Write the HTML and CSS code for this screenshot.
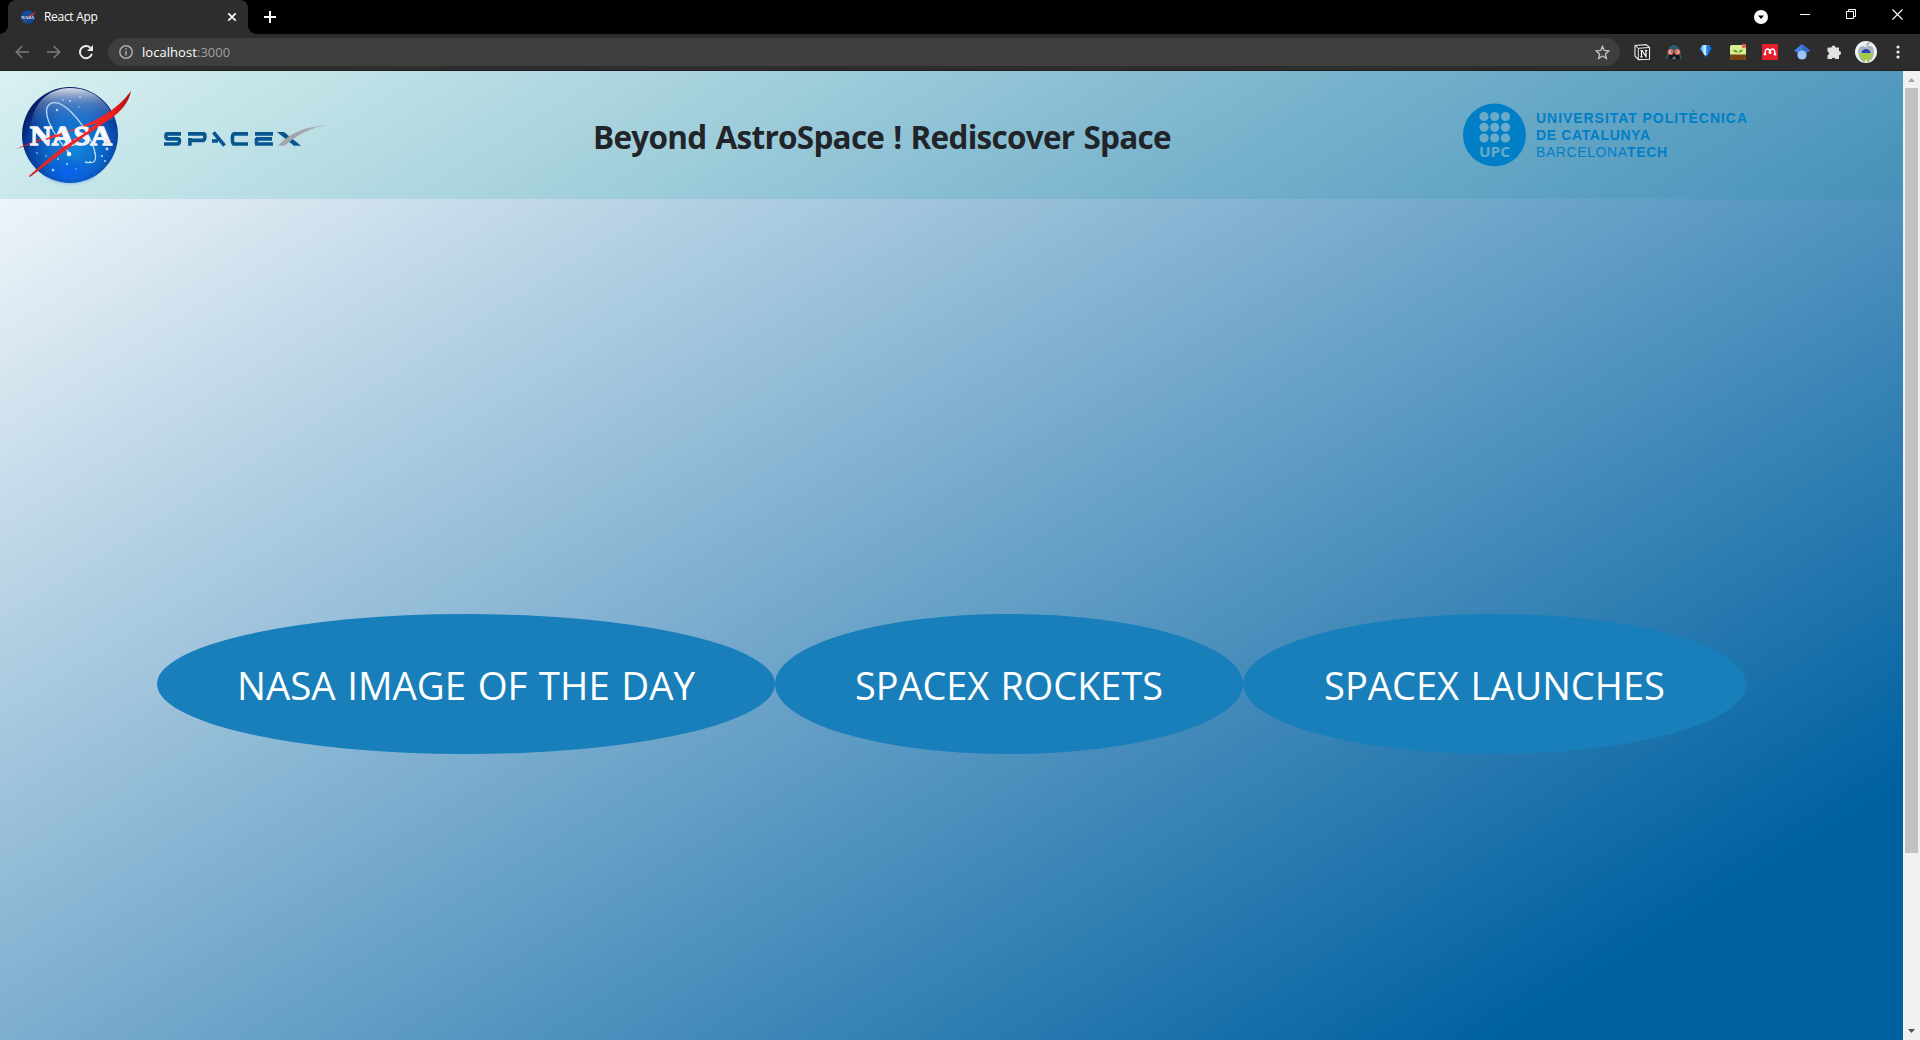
FILE: index.html
```html
<!DOCTYPE html>
<html lang="en">
<head>
<meta charset="utf-8">
<title>React App</title>
<link rel="stylesheet" href="styles.css">
</head>
<body>
<svg class="defs" width="0" height="0">
  <defs>
    <radialGradient id="globe" cx=".55" cy=".62" r=".58">
      <stop offset="0" stop-color="#138ade"/><stop offset=".55" stop-color="#0b62c4"/><stop offset=".85" stop-color="#073c9a"/><stop offset="1" stop-color="#03206a"/>
    </radialGradient>
    <linearGradient id="gloss" x1="0" y1="0" x2="0" y2="1">
      <stop offset="0" stop-color="#fff" stop-opacity=".85"/><stop offset=".35" stop-color="#bcd8f2" stop-opacity=".4"/><stop offset="1" stop-color="#4a96dd" stop-opacity="0"/>
    </linearGradient>
    <radialGradient id="glow"><stop offset="0" stop-color="#0a62f0"/><stop offset="1" stop-color="#0a62f0" stop-opacity="0"/></radialGradient>
    <linearGradient id="letters" x1="0" y1="0" x2="0" y2="1"><stop offset="0" stop-color="#fff"/><stop offset=".5" stop-color="#fff"/><stop offset="1" stop-color="#c9c9d2"/></linearGradient>
    <linearGradient id="wing" x1="0" y1="0" x2="1" y2="0"><stop offset="0" stop-color="#b01825"/><stop offset=".5" stop-color="#fb3434"/><stop offset=".85" stop-color="#ea1c1c"/><stop offset="1" stop-color="#a80f12"/></linearGradient>
    <linearGradient id="swoosh" x1="0" y1="0" x2="1" y2="0"><stop offset="0" stop-color="#a3a7ab"/><stop offset=".6" stop-color="#a3a7ab"/><stop offset="1" stop-color="#a3a7ab" stop-opacity=".2"/></linearGradient>
    <linearGradient id="gem" x1="0" y1="0" x2="1" y2="0"><stop offset="0" stop-color="#15a5f5"/><stop offset=".45" stop-color="#dff5ff"/><stop offset=".55" stop-color="#2793ee"/><stop offset="1" stop-color="#0753bd"/></linearGradient>
  </defs>
</svg>

<div class="tabstrip">
  <div class="tab">
    <svg class="favicon" viewBox="0 0 118 98"><circle cx="54" cy="49" r="47" fill="#104b9c"/><path d="M0 63Q84 36 115 6Q94 44 13 92Q60 53 82 37Q40 50 0 63Z" fill="#dc2f36"/><text x="9" y="63" class="nasa-text" textLength="90" lengthAdjust="spacingAndGlyphs" fill="#fff">NASA</text></svg>
    <span class="tab-title">React App</span>
    <svg class="tab-close" width="10" height="10" viewBox="0 0 10 10"><path d="M1.3 1.3l7.4 7.4M8.7 1.3L1.3 8.7" stroke="#fff" stroke-width="1.7"/></svg>
  </div>
  <svg class="new-tab" width="12" height="12" viewBox="0 0 12 12"><path d="M6 0v12M0 6h12" stroke="#fff" stroke-width="2"/></svg>
  <div class="window-controls">
    <svg width="14" height="14" viewBox="0 0 14 14"><circle cx="7" cy="7" r="7" fill="#fff"/><path d="M4 5.400h6L7 9z" fill="#000"/></svg>
    <svg width="10" height="10" viewBox="0 0 10 10"><path d="M0 5.500h10" stroke="#fff"/></svg>
    <svg width="10" height="10" viewBox="0 0 10 10"><path d="M.5 2.500h7v7h-7zM2.500 2.500v-2h7v7h-2" fill="none" stroke="#fff"/></svg>
    <svg width="11" height="11" viewBox="0 0 11 11"><path d="M.5.5l10 10M10.500.5l-10 10" stroke="#fff" stroke-width="1.100"/></svg>
  </div>
</div>

<div class="toolbar">
  <svg class="nav" width="14" height="14" viewBox="0 0 14 14"><path d="M14 7H1.400M7.300 1L1.300 7l6 6" fill="none" stroke="#7c7c7c" stroke-width="1.600"/></svg>
  <svg class="nav" width="14" height="14" viewBox="0 0 14 14"><path d="M0 7h12.600M6.700 1l6 6-6 6" fill="none" stroke="#7c7c7c" stroke-width="1.600"/></svg>
  <svg class="nav" width="14" height="14" viewBox="0 0 14 14"><path d="M12.900 8.800A6.100 6.100 0 1 1 11.300 2.700" fill="none" stroke="#ececec" stroke-width="1.900"/><path d="M14 0v6H8z" fill="#ececec"/></svg>
  <div class="omnibox">
    <svg width="14" height="14" viewBox="0 0 14 14"><circle cx="7" cy="7" r="6.200" fill="none" stroke="#a9acb0" stroke-width="1.500"/><path d="M7 6v4.500M7 3.300v1.500" stroke="#a9acb0" stroke-width="1.500"/></svg>
    <span class="url"><b>localhost</b>:3000</span>
    <svg class="star" width="15" height="15" viewBox="0 0 15 15"><path d="M7.500 1.400l1.800 4.100 4.500.4-3.400 3 1 4.400-3.900-2.300-3.900 2.300 1-4.400-3.400-3 4.500-.4z" fill="none" stroke="#c6c6c6" stroke-width="1.300"/></svg>
  </div>
  <div class="extensions">
    <svg width="16" height="16" viewBox="0 0 16 16"><path d="M1 1.500L12 .6l3.500 2.600v12l-11 .4L1 12z" fill="#232323" stroke="#eee" stroke-width="1.100"/><path d="M1 1.500L4.300 4.300l11-.8M4.300 4.300v11" fill="none" stroke="#eee"/><path d="M6.500 6.500H8l4 6V6.500M7.500 6.500v6.300M6.300 12.800h2.400M10.800 6.500h2.600" fill="none" stroke="#fff" stroke-width="1.200"/></svg>
    <svg width="16" height="16" viewBox="0 0 16 16"><path d="M2 8C2-1.500 14-1.500 14 8l2 7H0z" fill="#285e70"/><path d="M3 8h10l1 7H2z" fill="#141a21"/><circle cx="4.600" cy="8" r="2.300" fill="#fff" stroke="#e36552" stroke-width="1.500"/><circle cx="11.400" cy="8" r="2.300" fill="#fff" stroke="#e36552" stroke-width="1.500"/><circle cx="5" cy="8" r=".8"/><circle cx="11" cy="8" r=".8"/><path d="M6 15l2-3 2 3z" fill="#698594"/></svg>
    <svg width="16" height="16" viewBox="0 0 16 16"><path d="M4.500 1h7L14 4.500 9 12H7L2 4.500z" fill="url(#gem)"/><path d="M6.500 11.500h3v2.500h-3z" fill="#17446c"/></svg>
    <svg width="16" height="16" viewBox="0 0 16 16"><rect y="1" width="16" height="15" rx="2" fill="#d9ee91"/><path d="M0 10.500h16V14q0 2-2 2H2q-2 0-2-2z" fill="#794415"/><path d="M8 10.500V8.500Q4 9 3 6q4-1 5 2.500Q10 5 13 6q-1 3-5 2.500" fill="#569d28"/><circle cx="14" cy="2" r="2.200" fill="#ed5d60"/></svg>
    <svg width="16" height="16" viewBox="0 0 16 16"><path d="M0 0h16v16H0z" fill="#e91e2d"/><path d="M3.200 10Q3 5 5.400 5T8 8.500Q8.200 5 10.600 5T12.800 10" fill="none" stroke="#fff" stroke-width="1.500"/><circle cx="3" cy="10.200" r="1.300" fill="#fff"/><circle cx="8" cy="8.600" r="1.500" fill="#fff"/><circle cx="13" cy="10.200" r="1.300" fill="#fff"/></svg>
    <svg width="16" height="16" viewBox="0 0 16 16"><path d="M8 0l8 6.500L11 10H5L0 6.500z" fill="#447fe5"/><path d="M8 0l8 6.500L11 10 8 6z" fill="#356ac3"/><circle cx="8" cy="11" r="4.600" fill="#9fc2fa"/></svg>
    <svg width="16" height="16" viewBox="0 0 16 16"><path d="M2 3.500h3.500a2 2 0 0 1 4 0H13V7a2 2 0 0 1 0 4.200v3.900H9.200a1.800 1.800 0 0 0-3.500 0H1.500v-3.800a2 2 0 0 0 0-3.900V4z" fill="#e0e0e0"/></svg>
    <svg width="22" height="22" viewBox="0 0 22 22"><circle cx="11" cy="11" r="11" fill="#eef1f4"/><path d="M11 6c5-3 8 0 8 5s-3 9-5 9l-3-1-3 1C6 20 3 15 3 11s3-8 8-5zM11 5q0-4 4-4-1 4-4 4" fill="#abb5bf"/><path d="M6.500 12a4.500 4 0 0 1 9 0z" fill="#2643c3"/><path d="M6.500 12h9v6h-9zM4.300 12h1.400v4H4.300zM16.300 12h1.400v4h-1.400zM8 18h2v3H8zM12 18h2v3h-2z" fill="#a4ca3a"/></svg>
    <svg class="menu" width="4" height="14" viewBox="0 0 4 14"><g fill="#ececec"><circle cx="2" cy="2" r="1.600"/><circle cx="2" cy="7" r="1.600"/><circle cx="2" cy="12" r="1.600"/></g></svg>
  </div>
</div>

<div class="viewport">
  <div class="page">
    <header class="header">
      <svg class="nasa" width="118" height="98" viewBox="0 0 118 98">
        <circle cx="54" cy="49" r="48" fill="url(#globe)"/>
        <ellipse cx="54" cy="86" rx="30" ry="14" fill="url(#glow)"/>
        <path d="M54 2C78 2 93 18 98 33Q58 46 15 44C15 18 32 2 54 2z" fill="url(#gloss)"/>
        <g fill="#a8e4ff"><circle cx="41" cy="24" r="1.200"/><circle cx="47" cy="14" r=".8"/><circle cx="54" cy="15" r=".9"/><circle cx="64" cy="11" r=".9"/><circle cx="63" cy="21" r=".7"/><circle cx="37" cy="84" r="1.300"/><circle cx="51" cy="78" r="1"/><circle cx="42" cy="73" r=".9"/><circle cx="74" cy="76" r="1"/><circle cx="91" cy="63" r="1.400"/><circle cx="86" cy="70" r="1.100"/><circle cx="89" cy="75" r="1"/><circle cx="30" cy="70" r=".8"/><circle cx="21" cy="67" r=".8"/><circle cx="79" cy="67" r=".8"/><circle cx="60" cy="83" r=".7"/></g>
        <path d="M55 69C35 47 25 24 34 18c11-7 32 16 42 39 6 16 5 22-7 19" fill="none" stroke="#b8dcf5" stroke-width="1.300"/>
        <circle cx="53" cy="68" r="2.200" fill="#fff"/>
        <path d="M0 63Q20 53 45 47Q95 33 115 5Q112 21 94 33Q60 56 14 91L13 90Q48 57 82 37Q45 48 0 63Z" fill="url(#wing)"/>
        <text x="14" y="58.500" class="nasa-text" textLength="82" lengthAdjust="spacingAndGlyphs" fill="url(#letters)" stroke="#f4f4f7" stroke-width="1.300">NASA</text>
        <path d="M30 52.500Q40 48.500 46 47L45 50Q40 51 30 54z" fill="#f03036"/>
        <path d="M13 91Q43 68 76 45L73 44.500Q40 64 13 91z" fill="#df2730"/>
      </svg>
      <svg class="spacex" width="168" height="24" viewBox="0 0 168 24">
        <g fill="none" stroke="#07568f" stroke-width="3.600">
          <path d="M18 9.900H4Q2.900 9.900 2.900 12T4 14.900H15Q16.500 14.900 16.500 17T15 20H1"/>
          <path d="M26.900 21.800V14M25 9.900H40.500Q42 9.900 42 12.500T40.500 16.400H26"/>
          <path d="M50.500 8.300L61.500 21.700M49 17h6"/>
          <path d="M85 9.900H71Q69.400 9.900 69.400 14.900T71 20H85"/>
          <path d="M92 9.900h18M93 14.900h16M92 20h18M93.500 14v6"/>
        </g>
        <path d="M114 8h7l17 13.800h-7z" fill="#07568f"/>
        <path d="M115 21.800Q131 3 166 1Q139 5 122 21.800z" fill="url(#swoosh)"/>
      </svg>
      <h1 class="title">Beyond AstroSpace ! Rediscover Space</h1>
      <svg class="upc" width="286" height="64" viewBox="0 0 286 64">
        <circle cx="31.500" cy="32" r="31.500" fill="#007fc7"/>
        <g fill="#69abc8"><circle cx="21" cy="13.500" r="4.600"/><circle cx="31.700" cy="13.500" r="4.600"/><circle cx="42.500" cy="13.500" r="4.600"/><circle cx="21" cy="24.300" r="4.600"/><circle cx="31.700" cy="24.300" r="4.600"/><circle cx="42.500" cy="24.300" r="4.600"/><circle cx="21" cy="35" r="4.600"/><circle cx="31.700" cy="35" r="4.600"/><circle cx="42.500" cy="35" r="4.600"/>
        <text x="16" y="54" class="upc-mark" textLength="31" lengthAdjust="spacingAndGlyphs">UPC</text></g>
        <g class="upc-text" fill="#007fc7">
          <text x="73" y="20" textLength="211">UNIVERSITAT POLITÈCNICA</text>
          <text x="73" y="37" textLength="114">DE CATALUNYA</text>
          <text x="73" y="54" class="thin" textLength="91">BARCELONA</text><text x="164" y="54" textLength="40">TECH</text>
        </g>
      </svg>
    </header>
    <main class="hero">
      <a class="bubble image"><svg class="label" width="460" height="66"><text x="1" y="49" textLength="458" lengthAdjust="spacingAndGlyphs">NASA IMAGE OF THE DAY</text></svg></a>
      <a class="bubble rockets"><svg class="label" width="310" height="66"><text x="1" y="49" textLength="308" lengthAdjust="spacingAndGlyphs">SPACEX ROCKETS</text></svg></a>
      <a class="bubble launches"><svg class="label" width="343" height="66"><text x="1" y="49" textLength="341" lengthAdjust="spacingAndGlyphs">SPACEX LAUNCHES</text></svg></a>
    </main>
  </div>
  <div class="scrollbar">
    <svg width="17" height="17" viewBox="0 0 17 17"><path d="M5 11h7L8.500 7z" fill="#a3a3a3"/></svg>
    <div class="thumb"></div>
    <svg class="down" width="17" height="17" viewBox="0 0 17 17"><path d="M5 6h7L8.500 10z" fill="#505050"/></svg>
  </div>
</div>
</body>
</html>
```
FILE: styles.css
```css
* { box-sizing: border-box; }
body { margin: 0; height: 1040px; overflow: hidden; display: flex; flex-direction: column; font-family: "Open Sans", "Noto Sans", sans-serif; }
svg { display: block; flex: none; overflow: visible; }
.defs { position: absolute; }

.tabstrip { height: 34px; background: #000; display: flex; align-items: flex-start; flex: none; padding-left: 8px; }
.tab { width: 240px; height: 34px; background: #2d2d2d; border-radius: 8px 8px 0 0; display: flex; align-items: center; padding: 0 11px 0 12px; position: relative; }
.tab::before, .tab::after { content: ""; position: absolute; bottom: 0; width: 8px; height: 8px; }
.tab::before { left: -8px; background: radial-gradient(circle at 0 0, transparent 7.5px, #2d2d2d 8px); }
.tab::after { right: -8px; background: radial-gradient(circle at 100% 0, transparent 7.5px, #2d2d2d 8px); }
.favicon { width: 17px; height: 14px; }
.tab-title { color: #fff; font: 12px "Open Sans", sans-serif; letter-spacing: -.3px; margin: 0 0 1px 7px; flex: 1; }
.new-tab { margin: 11px 0 0 16px; }
.window-controls { margin-left: auto; display: flex; gap: 36px; padding: 9px 17px 0 0; }
.window-controls svg:first-child { margin: 1px -4px 0 0; }

.toolbar { height: 37px; flex: none; background: #2d2d2d; border-bottom: 1px solid #231f20; display: flex; align-items: center; padding-left: 15px; }
.nav { margin-right: 18px; }
.omnibox { width: 1512px; height: 28px; margin-left: -3px; background: #3e3e3e; border-radius: 14px; display: flex; align-items: center; padding: 0 10px 0 11px; }
.url { color: #a0a0a0; font-size: 13px; letter-spacing: .05px; margin-left: 9px; }
.url b { color: #fff; font-weight: 400; }
.star { margin-left: auto; }
.extensions { display: flex; align-items: center; gap: 16px; margin-left: 14px; }
.extensions svg:nth-child(8) { margin-left: -3px; }
.menu { margin-left: 3px; }

.viewport { height: 969px; flex: none; display: flex; }
.page { width: 1903px; height: 969px; background: linear-gradient(to bottom right, #fff 0%, #0061a1 80%) 0 0 / 1903px 1184px no-repeat; overflow: hidden; }
.header { height: 128px; display: flex; align-items: flex-start; background: linear-gradient(148deg, #d9f1f1, #b2d9e1 26%, #9dccda 40%, #77b2cc 64.5%, #4d97bd 94%, #4691b7); }
.nasa { margin: 15px 0 0 16px; }
.nasa-text { font: bold 28px "Liberation Serif", serif; }
.spacex { margin: 53px 0 0 29px; }
.title { width: 580px; margin: 45px 0 0 262px; color: #212529; font: 700 31.5px/42px "Open Sans", "Noto Sans", sans-serif; white-space: nowrap; letter-spacing: -.72px; word-spacing: 1.5px; }
.upc { margin: 32px 0 0 290px; }
.upc-mark { font: bold 15px "Open Sans", sans-serif; }
.upc-text { font: bold 14px "Liberation Sans", sans-serif; }
.thin { font-weight: 400; }
.hero { padding: 415px 0 0 157px; display: flex; }
.bubble { height: 140px; border-radius: 50%; background: #187fbb; display: flex; align-items: center; justify-content: center; }
.image { width: 618px; }
.rockets { width: 468px; }
.launches { width: 503px; }
.label { fill: #fff; font: 39px "Open Sans", "Noto Sans", sans-serif; word-spacing: 1.5px; }

.scrollbar { width: 17px; height: 969px; background: #f1f1f1; display: flex; flex-direction: column; }
.thumb { height: 765px; margin: 0 2px; background: #c1c1c1; }
.down { margin-top: auto; }
```
